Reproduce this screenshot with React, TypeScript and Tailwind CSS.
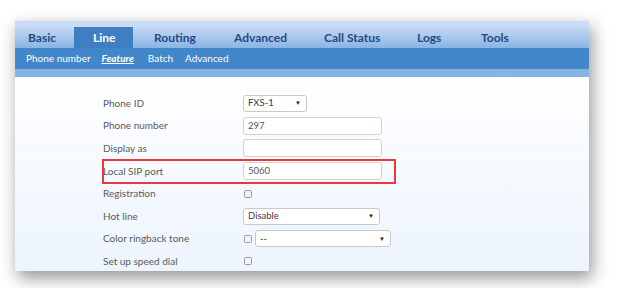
import React from "react";

const tabs: { t: string; w: string }[] = [
  { t: "Basic", w: "w-[59px] pl-[13px]" },
  { t: "Line", w: "w-[59px] pl-[19px]" },
  { t: "Routing", w: "w-[80px] pl-[21px]" },
  { t: "Advanced", w: "w-[91px] pl-[21px]" },
  { t: "Call Status", w: "w-[94px] pl-[20px]" },
  { t: "Logs", w: "w-[63px] pl-[19px]" },
  { t: "Tools", w: "w-[67px] pl-[20px]" },
];

function Caret() {
  return <span className="text-[6px] leading-none text-[#222]">▼</span>;
}

function Select({ value, w }: { value: string; w: string }) {
  return (
    <div className={`${w} h-[17px] flex items-center justify-between bg-white border border-[#c9c9c9] rounded-[3px] pl-[4px] pr-[5px] text-[9.5px] text-[#3a3a3a]`}>
      <span>{value}</span>
      <Caret />
    </div>
  );
}

function Input({ value }: { value: string }) {
  return (
    <div className="w-[139px] h-[18px] flex items-center bg-white border border-[#d2d2d2] rounded-[3px] pl-[4px] text-[9.5px] text-[#555]">
      {value}
    </div>
  );
}

function Check() {
  return <div className="w-[8px] h-[8px] border border-[#9a9a9a] rounded-[1.5px] bg-[#f3f3f3] ml-[1px]" />;
}

function Row({ label, children }: { label: string; children?: React.ReactNode }) {
  return (
    <div className="flex items-center h-[22.6px] shrink-0">
      <div className="w-[140px] text-[10px] text-[#5a5a5a]">{label}</div>
      <div className="flex items-center gap-[3px]">{children}</div>
    </div>
  );
}

export default function App() {
  return (
    <div className="w-[618px] h-[288px] bg-white relative overflow-hidden" style={{ fontFamily: "Lato, 'Open Sans', sans-serif" }}>
      <div className="absolute left-[15px] top-[20px] w-[574px] h-[251px] flex flex-col shadow-[3px_7px_16px_rgba(0,0,0,0.42)] bg-white">
        <div className="h-[1px] shrink-0 bg-[#e4e9ef]" />
        <div className="h-[6px] shrink-0 bg-[#c9dcf3]" />
        <div className="h-[21px] shrink-0 flex bg-gradient-to-b from-[#c4d9f2] to-[#8ab4e4]">
          {tabs.map((x, i) => (
            <div
              key={x.t}
              className={`flex items-center shrink-0 text-[12px] font-bold ${x.w} ${i === 1 ? "bg-[#3f7fc1] text-white" : "text-[#1e4a86]"}`}
            >
              {x.t}
            </div>
          ))}
        </div>
        <div className="h-[21px] shrink-0 flex items-center bg-[#4287ca] text-white text-[10px] pl-[11px]">
          <span className="mr-[11px]">Phone number</span>
          <span className="mr-[14px] font-bold italic underline">Feature</span>
          <span className="mr-[12px]">Batch</span>
          <span>Advanced</span>
        </div>
        <div className="h-[8px] shrink-0 bg-[#86b4e3]" />
        <div className="flex-1 min-h-0 overflow-hidden bg-gradient-to-b from-white to-[#ecf4fd] pl-[88px] pt-[15px]">
          <Row label="Phone ID">
            <Select value="FXS-1" w="w-[64px]" />
          </Row>
          <Row label="Phone number">
            <Input value="297" />
          </Row>
          <Row label="Display as">
            <Input value="" />
          </Row>
          <div className="relative">
            <div className="absolute left-[-1px] top-[-1px] w-[294px] h-[25px] border-2 border-[#e8393c]" />
            <Row label="Local SIP port">
              <Input value="5060" />
            </Row>
          </div>
          <Row label="Registration">
            <Check />
          </Row>
          <Row label="Hot line">
            <Select value="Disable" w="w-[137px]" />
          </Row>
          <Row label="Color ringback tone">
            <Check />
            <Select value="--" w="w-[136px]" />
          </Row>
          <Row label="Set up speed dial">
            <Check />
          </Row>
        </div>
      </div>
    </div>
  );
}
